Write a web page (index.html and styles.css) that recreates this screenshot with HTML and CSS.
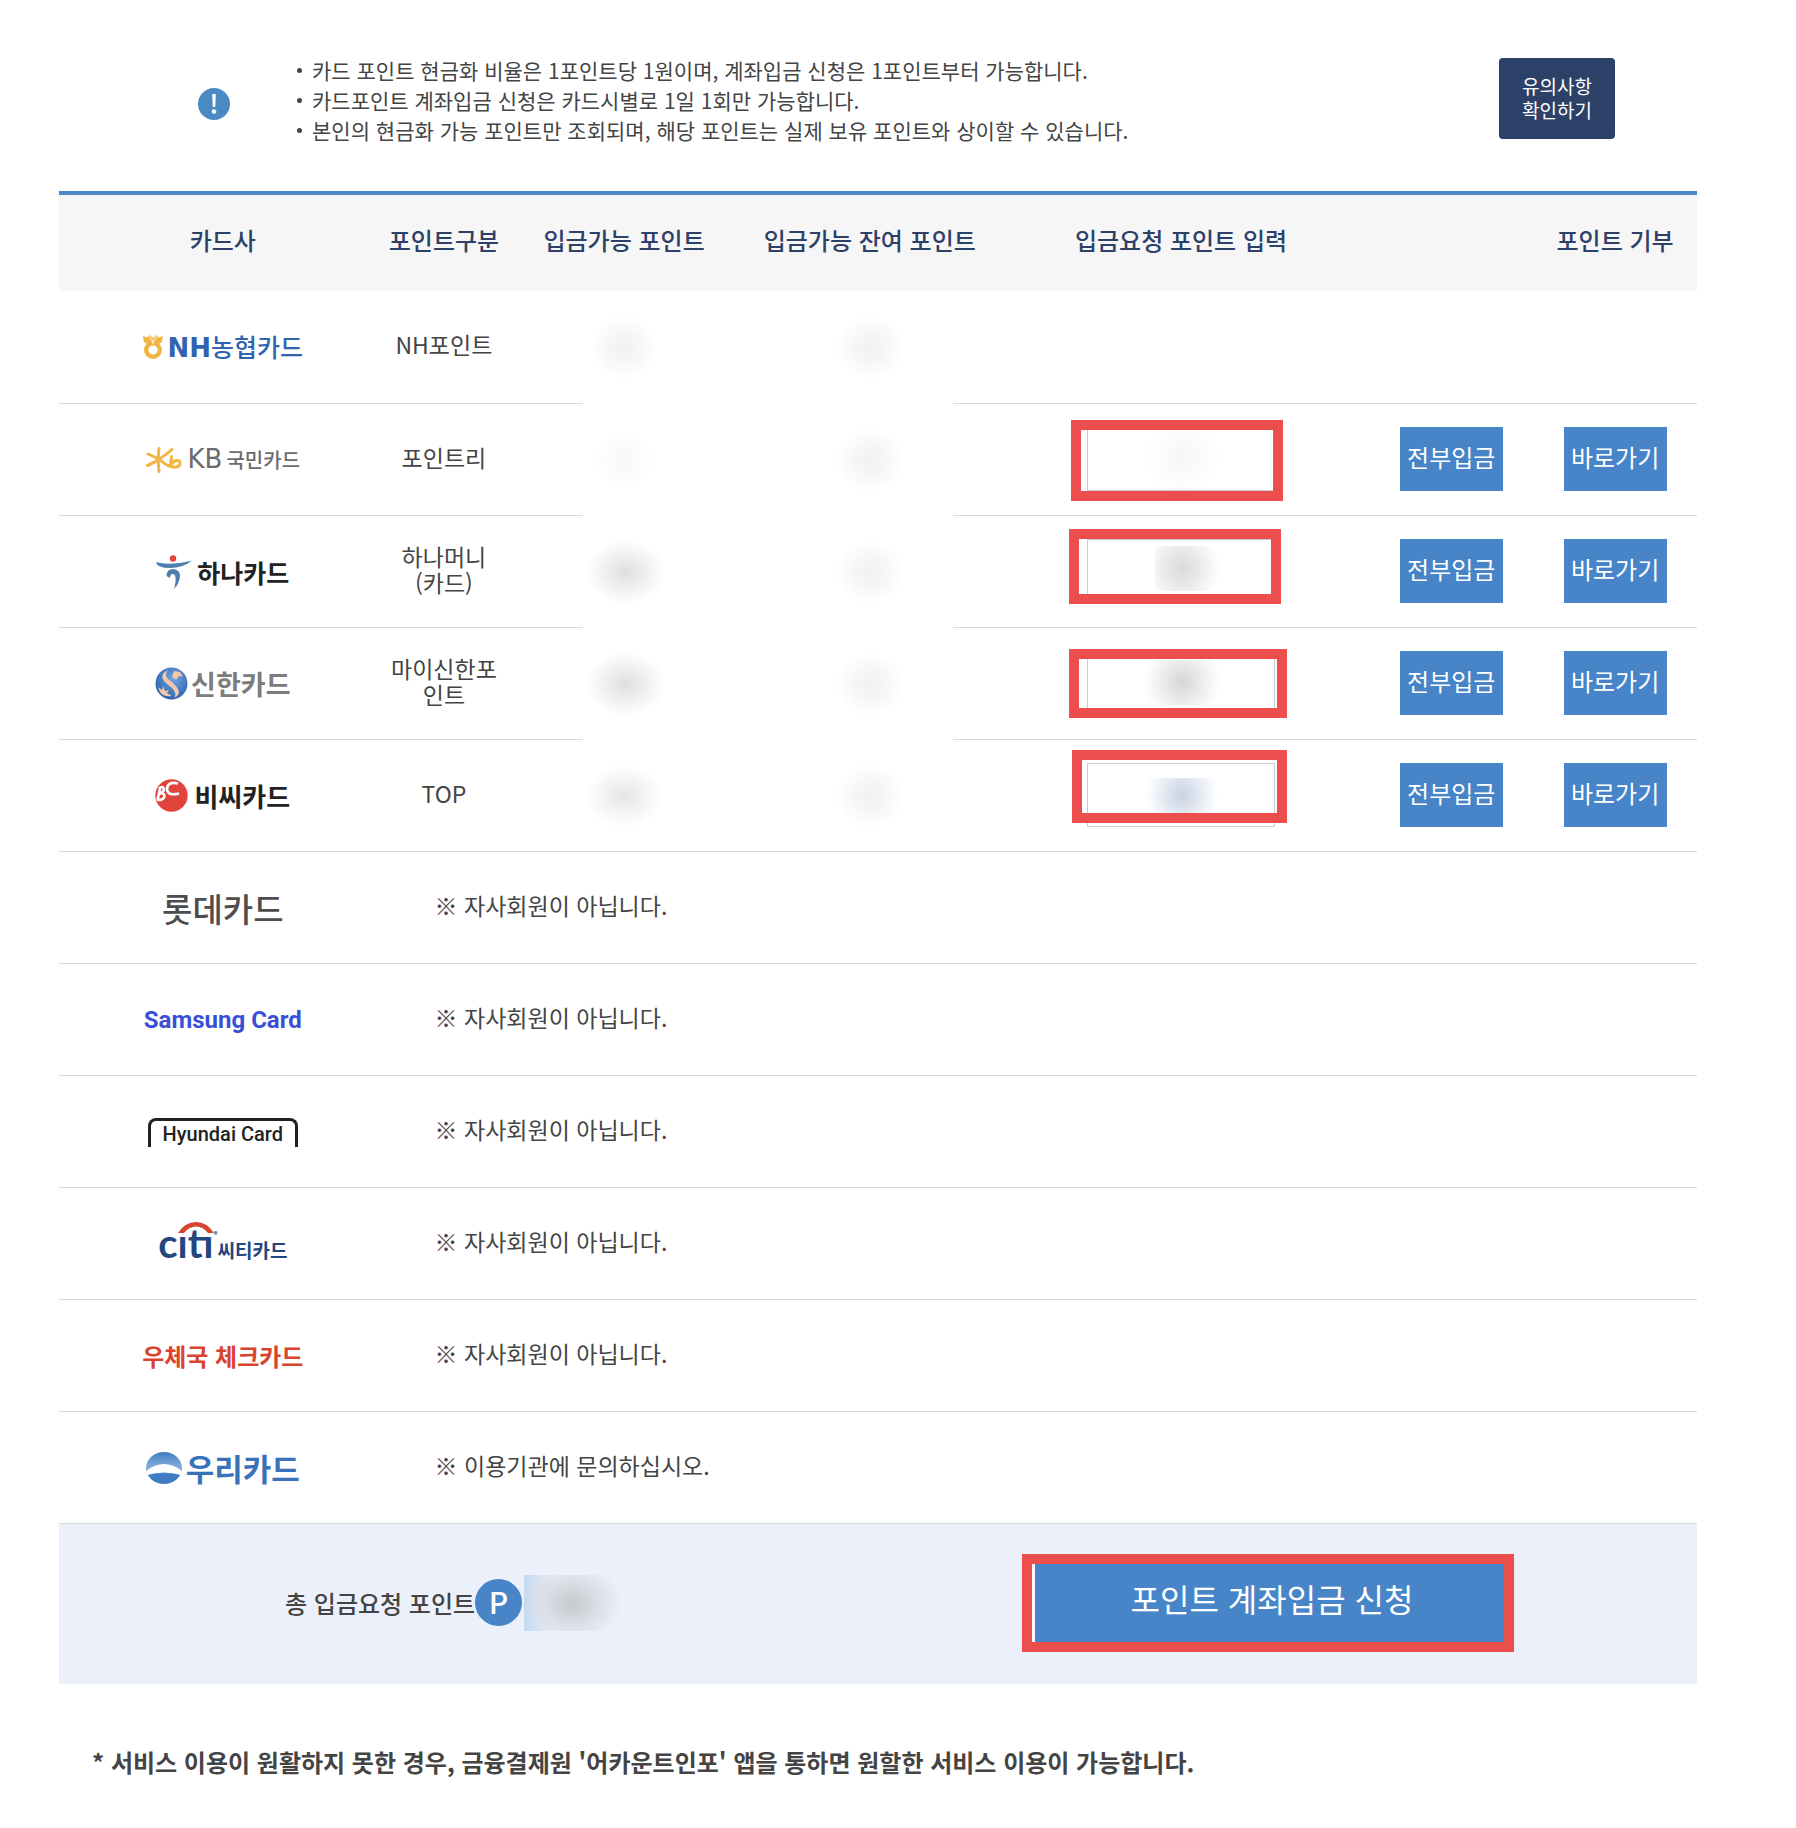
FILE: index.html
```html
<!DOCTYPE html>
<html lang="ko">
<head>
<meta charset="utf-8">
<meta name="viewport" content="width=device-width, initial-scale=1">
<title>카드 포인트 계좌입금</title>
<link rel="stylesheet" href="styles.css">
</head>
<body>
<main class="page">
  <section class="notice">
    <svg class="notice-icon" viewBox="0 0 32 32" aria-hidden="true"><circle cx="16" cy="16" r="16" fill="#4a89c4"/><path d="M14.2 6h3.600l-.5 13h-2.600z" fill="#fff"/><circle cx="16" cy="23.500" r="2.300" fill="#fff"/></svg>
    <ul class="notice-list">
      <li>카드 포인트 현금화 비율은 1포인트당 1원이며, 계좌입금 신청은 1포인트부터 가능합니다.</li>
      <li>카드포인트 계좌입금 신청은 카드시별로 1일 1회만 가능합니다.</li>
      <li>본인의 현금화 가능 포인트만 조회되며, 해당 포인트는 실제 보유 포인트와 상이할 수 있습니다.</li>
    </ul>
    <button type="button" class="notice-button">유의사항<br>확인하기</button>
  </section>

  <div class="table-wrap">
    <table class="points">
      <colgroup>
        <col class="col-20"><col class="col-7"><col class="col-15"><col class="col-15"><col class="col-23"><col class="col-10"><col class="col-10">
      </colgroup>
      <thead>
        <tr>
          <th scope="col">카드사</th>
          <th scope="col">포인트구분</th>
          <th scope="col">입금가능 포인트</th>
          <th scope="col">입금가능 잔여 포인트</th>
          <th scope="col">입금요청 포인트 입력</th>
          <td></td>
          <th scope="col">포인트 기부</th>
        </tr>
      </thead>
      <tbody>
        <tr>
          <th scope="row"><span class="logo logo-nh">
            <svg width="20" height="24" viewBox="0 0 20 24" aria-hidden="true"><circle cx="10" cy="15" r="6.800" fill="none" stroke="#f2b544" stroke-width="4.400"/><path d="M0 1l4 1.500L6.500 0 10 3l3.500-3L16 2.500 20 1l-1 6-4 2.500H5L1 7z" fill="#f2b544"/><path d="M6 1l4 6.500L14 1M10 4v5" stroke="#fff" stroke-width=".8" fill="none"/></svg>
            <span class="logo-pair"><b class="latin">NH</b><span class="hangul">농협카드</span></span></span></th>
          <td class="kind">NH포인트</td>
          <td><span class="blur blur-soft"></span></td>
          <td><span class="blur blur-soft"></span></td>
          <td></td><td></td><td></td>
        </tr>
        <tr>
          <th scope="row"><span class="logo logo-kb">
            <svg width="36" height="26" viewBox="0 0 36 26" aria-hidden="true"><path d="M13 1.500q-1.500 12 0 23M2 7l11 5Q20 8 26 2.500M1.500 18.500Q8 16 13 12q7 7 14 8M25.500 9.500l-1 10q9 2 9.500-3 0-3.500-3.500-3-4 1-6 5" fill="none" stroke="#f2b544" stroke-width="3" stroke-linecap="round" stroke-linejoin="round"/></svg>
            <span class="logo-pair"><span class="latin">KB</span><span class="hangul">국민카드</span></span></span></th>
          <td class="kind">포인트리</td>
          <td><span class="blur blur-faint"></span></td>
          <td><span class="blur blur-soft"></span></td>
          <td class="control"><span class="field"><input class="amount amount-kb" type="text" aria-label="KB국민카드 입금요청 포인트"><span class="mark mark-kb"></span></span></td>
          <td class="control"><button type="button" class="action">전부입금</button></td>
          <td class="control"><button type="button" class="action">바로가기</button></td>
        </tr>
        <tr>
          <th scope="row"><span class="logo logo-hana">
            <svg width="36" height="34" viewBox="0 0 36 34" aria-hidden="true"><circle cx="17" cy="3.500" r="3.200" fill="#e5443c"/><path d="M0 7q13 4 36-1.500Q27 13 14 13 1 13 0 7z" fill="#4c7fb0"/><path d="M10.500 21q0-7 7-7 7 1 6.500 8-1 7-6 12 2-7 1.500-11-.5-4-2.500-4-3 0-3 4z" fill="#4c7fb0"/></svg>
            <span>하나카드</span></span></th>
          <td class="kind">하나머니<br>(카드)</td>
          <td><span class="blur blur-strong"></span></td>
          <td><span class="blur blur-soft"></span></td>
          <td class="control"><span class="field"><input class="amount amount-hana" type="text" aria-label="하나카드 입금요청 포인트"><span class="mark mark-hana"></span></span></td>
          <td class="control"><button type="button" class="action">전부입금</button></td>
          <td class="control"><button type="button" class="action">바로가기</button></td>
        </tr>
        <tr>
          <th scope="row"><span class="logo logo-shinhan">
            <svg width="33" height="33" viewBox="0 0 33 33" aria-hidden="true"><defs><radialGradient id="globe" cx=".55" cy=".35" r=".65"><stop offset="0" stop-color="#6fa6dc"/><stop offset="1" stop-color="#2c62b0"/></radialGradient></defs><circle cx="16.500" cy="16.500" r="16" fill="url(#globe)"/><path d="M13 3Q4 8 9 14l9 8q4 5 1 9 7-3 4-9-3-5-10-10-4-4 0-9z" fill="#f0c8b0"/><path d="M17 10l2-6 6 1 3 5-4-1-3 4-2-2zM3 20l4 3 1-4 2 5 4-1-2 3 5 3q-9 1-12-4z" fill="#f3c7a8"/></svg>
            <span>신한카드</span></span></th>
          <td class="kind">마이신한포인트</td>
          <td><span class="blur blur-strong"></span></td>
          <td><span class="blur blur-soft"></span></td>
          <td class="control"><span class="field"><input class="amount amount-shinhan" type="text" aria-label="신한카드 입금요청 포인트"><span class="mark mark-shinhan"></span></span></td>
          <td class="control"><button type="button" class="action">전부입금</button></td>
          <td class="control"><button type="button" class="action">바로가기</button></td>
        </tr>
        <tr>
          <th scope="row"><span class="logo logo-bc">
            <svg width="33" height="33" viewBox="0 0 33 33" aria-hidden="true"><circle cx="16.500" cy="16.500" r="16.200" fill="#e0443a"/><path d="M4 9.500q4-3 5 .5 0 3-4 4.500 5-.5 4.500 3-1.500 4-7.500 3.500M5 9.500L2.500 21M23 4.500Q13 2 12 9.500q0 8 12 5" fill="none" stroke="#fff" stroke-width="2.600"/></svg>
            <span>비씨카드</span></span></th>
          <td class="kind">TOP</td>
          <td><span class="blur blur-medium"></span></td>
          <td><span class="blur blur-soft"></span></td>
          <td class="control"><span class="field"><input class="amount amount-bc" type="text" aria-label="비씨카드 입금요청 포인트"><span class="mark mark-bc"></span></span></td>
          <td class="control"><button type="button" class="action">전부입금</button></td>
          <td class="control"><button type="button" class="action">바로가기</button></td>
        </tr>
        <tr>
          <th scope="row"><span class="logo logo-lotte">롯데카드</span></th>
          <td colspan="6" class="message">※ 자사회원이 아닙니다.</td>
        </tr>
        <tr>
          <th scope="row"><span class="logo logo-samsung">Samsung Card</span></th>
          <td colspan="6" class="message">※ 자사회원이 아닙니다.</td>
        </tr>
        <tr>
          <th scope="row"><span class="logo logo-hyundai">Hyundai Card</span></th>
          <td colspan="6" class="message">※ 자사회원이 아닙니다.</td>
        </tr>
        <tr>
          <th scope="row"><span class="logo logo-citi"><span class="citi-word">cıtı<svg class="citi-arc" width="36" height="12" viewBox="0 0 36 12" aria-hidden="true"><path d="M0 11Q7 0 18 0t18 11h-6q-5-6.500-12-6.500T6 11z" fill="#d9442f"/></svg></span><small>®</small><span class="citi-name">씨티카드</span></span></th>
          <td colspan="6" class="message">※ 자사회원이 아닙니다.</td>
        </tr>
        <tr>
          <th scope="row"><span class="logo logo-post">우체국 체크카드</span></th>
          <td colspan="6" class="message">※ 자사회원이 아닙니다.</td>
        </tr>
        <tr>
          <th scope="row"><span class="logo logo-woori">
            <svg width="36" height="32" viewBox="0 0 36 32" aria-hidden="true"><defs><linearGradient id="sky" x1="0" y1="0" x2="0" y2="1"><stop offset="0" stop-color="#3f7cc4"/><stop offset=".5" stop-color="#8ab2df"/><stop offset=".7" stop-color="#3f7cc4"/></linearGradient></defs><ellipse cx="18" cy="16" rx="18" ry="16" fill="url(#sky)"/><path d="M0 19Q18 5 36 19l-1 4q-17-5-34 0z" fill="#fff"/></svg>
            <span>우리카드</span></span></th>
          <td colspan="6" class="message">※ 이용기관에 문의하십시오.</td>
        </tr>
      </tbody>
    </table>
    <div class="mask"></div>
  </div>

  <section class="total">
    <span class="total-label">총 입금요청 포인트</span>
    <span class="total-badge">P</span>
    <span class="total-value"></span>
    <span class="submit-field">
      <button type="button" class="submit">포인트 계좌입금 신청</button>
      <span class="mark mark-submit"></span>
    </span>
  </section>

  <p class="footnote">* 서비스 이용이 원활하지 못한 경우, 금융결제원 '어카운트인포' 앱을 통하면 원할한 서비스 이용이 가능합니다.</p>
</main>
</body>
</html>
```
FILE: styles.css
```css
* {
  box-sizing: border-box;
}

body {
  margin: 0;
  background: #fff;
  color: #444;
  font-family: "Noto Sans CJK KR", sans-serif;
  font-size: 23px;
  line-height: 26px;
}

button,
input {
  font-family: inherit;
}

.page {
  padding: 55px 99px 48px 59px;
}

/* Notice */
.notice {
  display: flex;
  align-items: flex-start;
  padding: 0 82px 46px 139px;
}

.notice-icon {
  width: 32px;
  height: 32px;
  flex: none;
  margin-top: 33px;
}

.notice-list {
  flex: 1;
  margin: 0 0 0 67px;
  padding: 0;
  list-style: none;
  font-size: 21px;
  line-height: 30px;
}

.notice-list li {
  display: flex;
  align-items: center;
  gap: 10px;
}

.notice-list li::before {
  content: "";
  width: 5px;
  height: 5px;
  border-radius: 50%;
  background: #444;
}

.notice-button {
  width: 116px;
  height: 81px;
  margin-top: 3px;
  padding: 0 0 2px;
  border: 0;
  border-radius: 4px;
  background: #2d4168;
  color: #fff;
  font-size: 19px;
  line-height: 24px;
}

/* Table */
.table-wrap {
  position: relative;
}

.points {
  width: 100%;
  table-layout: fixed;
  border-spacing: 0;
  border-top: 4px solid #4a89c4;
}

.col-7 { width: 7%; }
.col-10 { width: 10%; }
.col-15 { width: 15%; }
.col-20 { width: 20%; }
.col-23 { width: 23%; }

.points th,
.points td {
  padding: 0;
  text-align: center;
  vertical-align: middle;
}

.points thead th,
.points thead td {
  height: 96px;
  padding-bottom: 6px;
  background: #f6f6f6;
  color: #2d4168;
  font-size: 24px;
  font-weight: 500;
  white-space: nowrap;
}

.points tbody th,
.points tbody td {
  height: 112px;
  border-top: 1px solid #d9dadc;
}

.points tbody tr:first-child > * {
  border-top: 0;
}

.points .kind,
.points .message {
  padding-bottom: 6px;
}

.points .control {
  padding-bottom: 2px;
}

.points .message {
  padding-left: 48px;
  text-align: left;
}

/* Obscured point values */
.mask {
  position: absolute;
  top: 133px;
  left: 32%;
  width: 370px;
  height: 498px;
  background: #fff;
}

.blur {
  display: block;
  position: relative;
  z-index: 1;
  width: 84px;
  height: 64px;
  margin: 0 auto;
}

.blur-faint { background: radial-gradient(30px 30px, #f7f7f7, #fbfbfb 50%, transparent); }
.blur-soft { background: radial-gradient(34px 32px, #f1f1f1, #f7f7f7 50%, transparent); }
.blur-medium { background: radial-gradient(38px 32px, #e5e5e5, #f3f3f3 50%, transparent); }
.blur-strong { background: radial-gradient(40px 32px at 44px 32px, #dfdfdf, #efefef 50%, transparent); }

/* Request inputs and highlight frames */
.field,
.submit-field {
  position: relative;
  display: inline-block;
  vertical-align: middle;
}

.amount {
  display: block;
  width: 188px;
  height: 64px;
  padding: 0 12px;
  border: 1px solid #ccc;
  background-color: #fff;
  background-repeat: no-repeat;
  font-size: 23px;
  text-align: center;
}

.amount-kb {
  background-image: radial-gradient(38px 40px at 94px 29px, #f6f6f6, #fbfbfb 50%, #fff);
}

.amount-hana {
  background-image: radial-gradient(38px 40px at 27px 22px, #d9d9d9, #ebebeb 50%, #fff);
  background-size: 76px 45px;
  background-position: 67px 6px;
}

.amount-shinhan {
  background-image: radial-gradient(38px 40px at 50% 22px, #d6d6d6, #ebebeb 50%, #fff);
  background-size: 96px 45px;
  background-position: 46px 8px;
}

.amount-bc {
  background-image: radial-gradient(36px 40px at 50% 17px, #cad3e2, #e4e9f2 50%, #fff);
  background-size: 96px 36px;
  background-position: 46px 14px;
}

.mark {
  position: absolute;
  border: 10px solid #eb4e4c;
  pointer-events: none;
}

.mark-kb { left: -16px; top: -7px; width: 212px; height: 81px; }
.mark-hana { left: -18px; top: -10px; width: 212px; height: 75px; }
.mark-shinhan { left: -18px; top: -2px; width: 218px; height: 69px; }
.mark-bc { left: -15px; top: -13px; width: 215px; height: 73px; }
.mark-submit { left: -10px; top: -9px; width: 492px; height: 98px; }

.action {
  width: 103px;
  height: 64px;
  padding: 0 0 5px;
  border: 0;
  background: #4785c8;
  color: #fff;
  font-size: 24px;
  vertical-align: middle;
}

/* Card company logos */
.logo {
  display: inline-flex;
  align-items: center;
  justify-content: center;
  line-height: 32px;
  white-space: nowrap;
  vertical-align: middle;
}

.logo svg {
  flex: none;
}

.logo-pair {
  display: flex;
  align-items: baseline;
}

.latin {
  font-family: "DejaVu Sans", sans-serif;
  font-size: 26px;
}

.logo-nh { gap: 5px; color: #2f65b0; font-size: 25px; font-weight: 500; }
.logo-kb { gap: 6px; color: #6b6c70; font-size: 20px; font-weight: 500; }
.logo-kb .logo-pair { gap: 4px; }
.logo-kb .latin { font-weight: 400; }
.logo-hana { gap: 5px; color: #222; font-size: 25px; font-weight: 700; }
.logo-shinhan { gap: 3px; color: #7b7c80; font-size: 27px; font-weight: 700; }
.logo-bc { gap: 6px; color: #222; font-size: 26px; font-weight: 700; }
.logo-lotte { color: #4d4d4f; font-size: 33px; font-weight: 500; }
.logo-samsung { color: #3a4fd8; font-family: Roboto, sans-serif; font-size: 24px; font-weight: 700; }

.logo-hyundai {
  width: 150px;
  height: 29px;
  border: 3px solid #222;
  border-bottom: 0;
  border-radius: 8px 8px 0 0;
  color: #222;
  font-family: Roboto, sans-serif;
  font-size: 20px;
  font-weight: 500;
}

.logo-citi { align-items: baseline; padding-top: 6px; color: #24467f; }
.logo-citi small { align-self: flex-start; font-size: 8px; line-height: 16px; }

.citi-word {
  position: relative;
  font-family: Lato, sans-serif;
  font-size: 40px;
  font-weight: 700;
}

.citi-arc {
  position: absolute;
  right: -1px;
  top: -5px;
}

.citi-name { font-size: 19px; font-weight: 700; }
.logo-post { color: #d9442f; font-size: 24px; font-weight: 700; }
.logo-woori { gap: 4px; color: #3a72ba; font-size: 31px; font-weight: 700; }

/* Total */
.total {
  display: flex;
  align-items: center;
  height: 161px;
  padding: 0 188px 3px 226px;
  border-top: 1px solid #d9dadc;
  background: #ebf0fa;
}

.total-label {
  font-size: 24px;
  font-weight: 500;
}

.total-badge {
  width: 47px;
  height: 47px;
  border-radius: 50%;
  background: #4785c8;
  color: #fff;
  font-size: 30px;
  font-weight: 500;
  line-height: 44px;
  text-align: center;
}

.total-value {
  width: 104px;
  height: 56px;
  margin-left: 2px;
  background:
    radial-gradient(50px 42px at 48px 28px, #c6c9cd, #dadee5 50%, transparent),
    linear-gradient(90deg, #c6d9f0, transparent 30%);
}

.submit-field {
  margin-left: auto;
}

.submit {
  display: block;
  width: 477px;
  height: 80px;
  padding: 0 0 10px;
  border: 0;
  border-left: 3px solid #f8fafd;
  background: #4785c8;
  color: #fff;
  font-size: 32px;
}

.footnote {
  margin: 63px 0 0;
  padding-left: 33px;
  font-size: 24px;
  font-weight: 700;
  line-height: 30px;
}
```
